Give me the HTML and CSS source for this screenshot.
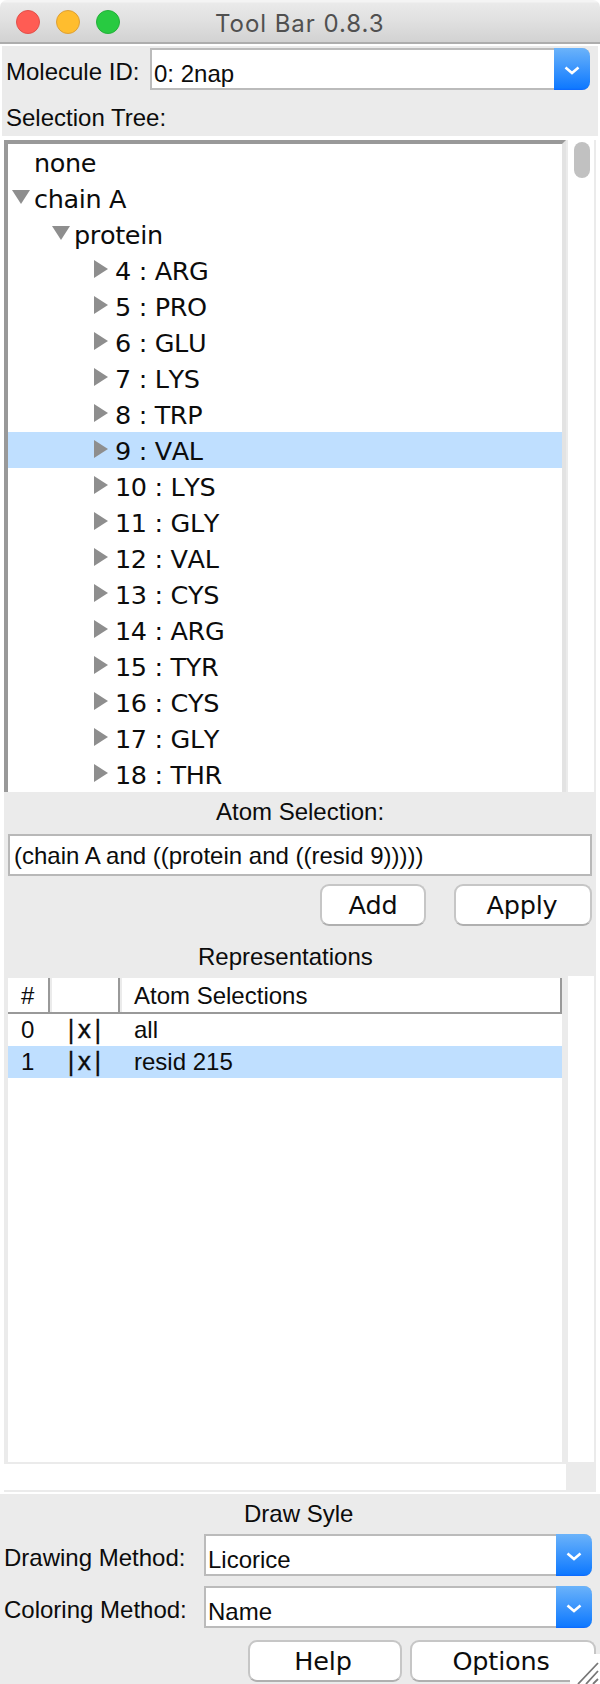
FILE: index.html
```
<!DOCTYPE html>
<html lang="en">
<head>
<meta charset="utf-8">
<title>Tool Bar 0.8.3</title>
<link rel="stylesheet" href="styles.css">
</head>
<body>
<svg class="defs" width="0" height="0">
  <symbol id="down" viewBox="0 0 18 14"><path d="M0 0H18L9 14Z"/></symbol>
  <symbol id="right" viewBox="0 0 14 18"><path d="M0 0L14 9L0 18Z"/></symbol>
  <symbol id="chev" viewBox="0 0 16 9"><path d="M1.5 1.5L8 7L14.5 1.5"/></symbol>
</svg>
<div class="window">
  <header class="titlebar">
    <span class="light red"></span><span class="light amber"></span><span class="light green"></span>
    <h1 class="title">Tool Bar 0.8.3</h1>
  </header>

  <section class="molecule">
    <div class="mol-row">
      <label class="mol-label">Molecule ID:</label>
      <div class="combo"><span class="value">0: 2nap</span><span class="arrow"><svg><use href="#chev"/></svg></span></div>
    </div>
    <div class="tree-label">Selection Tree:</div>
  </section>

  <section class="tree-area">
    <ul class="tree">
      <li class="l0">none</li>
      <li class="l0"><svg class="down"><use href="#down"/></svg>chain A</li>
      <li class="l1"><svg class="down"><use href="#down"/></svg>protein</li>
      <li class="l2"><svg class="right"><use href="#right"/></svg>4 : ARG</li>
      <li class="l2"><svg class="right"><use href="#right"/></svg>5 : PRO</li>
      <li class="l2"><svg class="right"><use href="#right"/></svg>6 : GLU</li>
      <li class="l2"><svg class="right"><use href="#right"/></svg>7 : LYS</li>
      <li class="l2"><svg class="right"><use href="#right"/></svg>8 : TRP</li>
      <li class="l2 selected"><svg class="right"><use href="#right"/></svg>9 : VAL</li>
      <li class="l2"><svg class="right"><use href="#right"/></svg>10 : LYS</li>
      <li class="l2"><svg class="right"><use href="#right"/></svg>11 : GLY</li>
      <li class="l2"><svg class="right"><use href="#right"/></svg>12 : VAL</li>
      <li class="l2"><svg class="right"><use href="#right"/></svg>13 : CYS</li>
      <li class="l2"><svg class="right"><use href="#right"/></svg>14 : ARG</li>
      <li class="l2"><svg class="right"><use href="#right"/></svg>15 : TYR</li>
      <li class="l2"><svg class="right"><use href="#right"/></svg>16 : CYS</li>
      <li class="l2"><svg class="right"><use href="#right"/></svg>17 : GLY</li>
      <li class="l2"><svg class="right"><use href="#right"/></svg>18 : THR</li>
    </ul>
    <div class="vscroll"><span class="thumb"></span></div>
  </section>

  <section class="selection">
    <div class="caption atom">Atom Selection:</div>
    <div class="entry">(chain A and ((protein and ((resid 9)))))</div>
    <div class="actions"><button class="btn add">Add</button><button class="btn apply">Apply</button></div>
    <div class="caption reps">Representations</div>
  </section>

  <section class="rep-area">
    <div class="table">
      <div class="row head"><span class="c1">#</span><span class="c2"></span><span class="c3">Atom Selections</span></div>
      <div class="row"><span class="c1">0</span><span class="c2">|x|</span><span class="c3">all</span></div>
      <div class="row selected"><span class="c1">1</span><span class="c2">|x|</span><span class="c3">resid 215</span></div>
    </div>
    <div class="vscroll"></div>
  </section>
  <div class="hscroll"><span class="track"></span></div>

  <section class="style-panel">
    <div class="caption draw">Draw Syle</div>
    <div class="field"><label>Drawing Method:</label><div class="combo"><span class="value">Licorice</span><span class="arrow"><svg><use href="#chev"/></svg></span></div></div>
    <div class="field"><label>Coloring Method:</label><div class="combo"><span class="value">Name</span><span class="arrow"><svg><use href="#chev"/></svg></span></div></div>
    <div class="footer"><button class="btn help">Help</button><button class="btn options">Options</button></div>
    <svg class="grip" viewBox="0 0 30 30"><path class="grip-bg" d="M0 0H30V30H0Z"/><path d="M8 30L28 9M16 30L28 17M23 30L28 25"/></svg>
  </section>
</div>
</body>
</html>
```
FILE: styles.css
```
* { box-sizing: border-box; }
body { margin: 0; background: #fff; color: #0c0c0c; font: 24px/30px "Liberation Sans", Arial, sans-serif; letter-spacing: 0; }
.defs { position: absolute; }
.window { width: 600px; height: 1684px; display: flex; flex-direction: column; background: #fff; }

.titlebar { height: 44px; flex: none; display: flex; align-items: center; gap: 16px; padding: 0 0 0 16px; border-bottom: 2px solid #adadad; background: linear-gradient(#f4f4f4 0 2px, #eaeaea 3px, #e0e0e0 50%, #d2d2d2); border-radius: 7px 7px 0 0; }
.light { width: 24px; height: 24px; border-radius: 50%; border: 1px solid; margin-top: 2px; }
.red { background: #ff5c54; border-color: #e2504a; }
.amber { background: #ffbd2e; border-color: #dea035; }
.green { background: #28ca41; border-color: #24b03a; }
.title { margin: 5px 0 0 79px; font: 400 24px/30px Inter, Roboto, sans-serif; letter-spacing: 0.95px; color: #505050; white-space: nowrap; }

.molecule { flex: none; height: 90px; margin: 2px 2px 0; background: #ebebeb; padding: 2px 8px 0 4px; }
.mol-row { display: flex; }
.mol-label { width: 144px; padding-top: 9px; white-space: nowrap; }
.tree-label { margin-top: 13px; }
.molecule .combo { width: 440px; flex: none; }
.combo { height: 42px; display: flex; background: #fff; border: 2px solid #bbb; border-right: 0; border-radius: 0 8px 8px 0; }
.value { flex: 1; padding: 9px 0 0 2px; line-height: 30px; }
.arrow { width: 36px; height: 42px; margin-top: -2px; display: flex; align-items: center; justify-content: center; background: linear-gradient(#6bb3fa, #107aff 95%, #0b68ff); border-radius: 0 8px 8px 0; }
.arrow svg { width: 16px; height: 9px; margin-top: 2px; fill: none; stroke: #fff; stroke-width: 2.6; }

.tree-area { flex: none; display: flex; height: 652px; margin: 4px 4px 0; }
.tree { flex: 1; margin: 0; padding: 0; list-style: none; border: solid #999; border-width: 4px 4px 0 4px; border-right-color: #e3e3e3; font: 25.5px/39px "DejaVu Sans", sans-serif; font-kerning: none; letter-spacing: -0.35px; overflow: hidden; }
.tree li { display: flex; height: 36px; white-space: pre; }
.tree svg { fill: #8e8e8e; flex: none; }
.down { width: 18px; height: 14px; margin: 10px 4px 0 0; }
.right { width: 14px; height: 18px; margin: 8px 7px 0 0; }
.l0 { padding-left: 4px; }
.l0:first-child { padding-left: 26px; }
.l1 { padding-left: 44px; }
.l2 { padding-left: 86px; }
.selected { background: #bfdfff; }
.vscroll { width: 30px; flex: none; border-left: 2px solid #ebebeb; border-right: 2px solid #ebebeb; background: #fff; padding: 2px 4px 0 6px; }
.thumb { display: block; height: 36px; border-radius: 8px; background: #c1c1c1; }

.selection { flex: none; height: 184px; margin: 0 4px; background: #ebebeb; padding: 5px 4px 0; }
.caption { white-space: nowrap; }
.atom { padding-left: 208px; }
.entry { margin-top: 7px; height: 42px; background: #fff; border: 2px solid #b8b8b8; padding: 5px 4px; white-space: nowrap; }
.actions { display: flex; justify-content: flex-end; gap: 28px; margin-top: 8px; }
.btn { height: 42px; padding: 0 2px 0 0; background: #fff; border: 2px solid #c6c6c6; border-bottom-color: #b0b0b0; border-radius: 9px; font: 25.5px/36px "DejaVu Sans", sans-serif; letter-spacing: -0.2px; color: #0c0c0c; }
.add { width: 106px; padding-right: 0; }
.apply { width: 138px; }
.reps { padding: 16px 0 0 190px; }

.rep-area { flex: none; display: flex; height: 488px; margin: 0 4px; border-bottom: 2px solid #ebebeb; }
.table { flex: 1; border: solid #ebebeb; border-width: 2px 4px 0 4px; }
.row { display: flex; height: 32px; line-height: 32px; }
.c1 { width: 42px; padding-left: 13px; }
.c2 { width: 70px; padding-left: 17px; font: 24px/32px "DejaVu Sans", sans-serif; letter-spacing: 2.2px; -webkit-text-stroke: 0.3px #0c0c0c; }
.c3 { flex: 1; padding-left: 14px; }
.head { height: 36px; }
.head span { border: solid #999; border-width: 0 2px 2px 0; box-shadow: inset 2px 0 #ebebeb; padding-top: 2px; }
.head .c1 { box-shadow: none; }

.hscroll { flex: none; height: 28px; margin: 0 4px; background: #ebebeb; display: flex; }
.track { width: 562px; height: 26px; background: #fff; }

.style-panel { position: relative; flex: none; height: 190px; margin-top: 2px; background: #ebebeb; }
.draw { padding: 5px 0 0 244px; height: 40px; }
.field { display: flex; padding: 0 8px 0 4px; height: 52px; white-space: nowrap; }
.field label { width: 200px; padding-top: 9px; }
.field .combo { flex: 1; }
.footer { display: flex; justify-content: flex-end; gap: 8px; padding: 2px 4px 0 0; }
.help { width: 154px; padding-right: 4px; }
.options { width: 186px; padding-right: 4px; }
.grip { position: absolute; right: 0; bottom: 0; width: 30px; height: 30px; fill: none; stroke: #777; stroke-width: 1.8; }
.grip-bg { fill: #fff; stroke: none; }
```
